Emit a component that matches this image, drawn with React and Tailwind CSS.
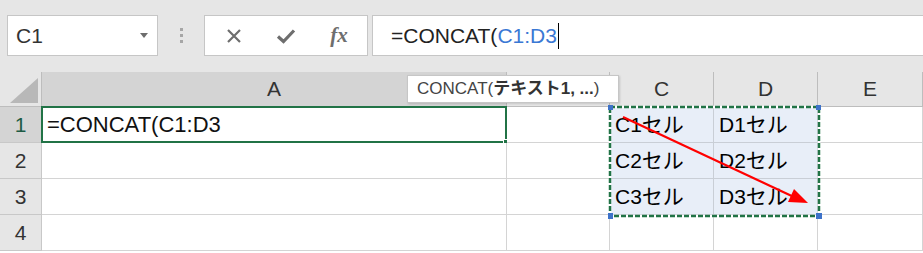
import React from 'react';

const FONT = { fontFamily: '"Liberation Sans", "Noto Sans CJK JP", sans-serif' };

const COLS = ['A', 'B', 'C', 'D', 'E'];
const DATA = {
  C1: 'C1セル', D1: 'D1セル',
  C2: 'C2セル', D2: 'D2セル',
  C3: 'C3セル', D3: 'D3セル',
};

const inSel = (col, row) => (col === 'C' || col === 'D') && row >= 1 && row <= 3;

const Toolbar = () => (
  <div className="h-[72px] bg-[#e6e6e6] flex items-start pt-[15px] pl-[7px]">
    {/* Name box */}
    <div className="w-[151px] h-[41px] bg-white border border-[#c6c6c6] flex items-center justify-between pl-[8px] pr-[9px]">
      <span className="text-[21px] text-[#333] leading-none">C1</span>
      <svg width="8" height="5" viewBox="0 0 8 5"><path d="M0 0h8L4 5z" fill="#6d6d6d" /></svg>
    </div>
    {/* grip dots */}
    <div className="w-[46px] h-[41px] flex flex-col items-center justify-center gap-[3px]">
      <div className="w-[3px] h-[3px] bg-[#a6a6a6]" />
      <div className="w-[3px] h-[3px] bg-[#a6a6a6]" />
      <div className="w-[3px] h-[3px] bg-[#a6a6a6]" />
    </div>
    {/* buttons */}
    <div className="w-[164px] h-[41px] bg-white border border-[#c6c6c6] flex items-center">
      <div className="w-[56px] flex justify-center pl-[2px]">
        <svg width="16" height="16" viewBox="0 0 16 16">
          <path d="M2 2L14 14M14 2L2 14" stroke="#6e6e6e" strokeWidth="2.2" />
        </svg>
      </div>
      <div className="w-[50px] flex justify-center">
        <svg width="20" height="16" viewBox="0 0 20 16">
          <path d="M2 8.5L7.5 13.5L18 2.5" stroke="#6e6e6e" strokeWidth="3.2" fill="none" strokeLinejoin="miter" />
        </svg>
      </div>
      <div className="w-[56px] flex justify-center">
        <span className="text-[21px] italic font-bold text-[#6e6e6e] leading-none" style={{ fontFamily: '"Liberation Serif", serif' }}>fx</span>
      </div>
    </div>
    {/* formula bar */}
    <div className="ml-[4px] flex-1 h-[41px] bg-white border border-[#c6c6c6] border-r-0 flex items-center pl-[18px]">
      <span className="text-[21px] leading-none text-[#222]">=CONCAT(</span>
      <span className="text-[21px] leading-none text-[#3a78d4]">C1:D3</span>
      <div className="w-px h-[26px] bg-black ml-[1px]" />
    </div>
  </div>
);

const Grid = () => (
  <div className="relative">
    <div className="grid grid-cols-[42px_465px_103px_104px_104px_1fr] grid-rows-[35px_36px_36px_36px_36px]">
      {/* corner */}
      <div className="bg-[#e6e6e6] border-r border-b border-[#bdbdbd] relative overflow-hidden">
        <svg className="absolute right-[3px] bottom-[3px]" width="28" height="25" viewBox="0 0 28 25">
          <path d="M28 0V25H0z" fill="#b8b8b8" />
        </svg>
      </div>
      {COLS.map((c) => (
        <div
          key={c}
          className={`${c === 'A' ? 'bg-[#d4d4d4]' : 'bg-[#e6e6e6]'} border-r border-b border-[#bdbdbd] flex items-center justify-center text-[21px] text-[#333]`}
        >
          {c === 'B' ? '' : c}
        </div>
      ))}
      {[1, 2, 3, 4].map((r) => (
        <React.Fragment key={r}>
          <div
            className={`${r === 1 ? 'bg-[#d4d4d4] text-[#1d5b44]' : 'bg-[#e6e6e6] text-[#333]'} border-r border-b border-[#c8c8c8] flex items-center justify-center text-[21px]`}
          >
            {r}
          </div>
          {COLS.map((c) => {
            const key = `${c}${r}`;
            const sel = inSel(c, r);
            return (
              <div
                key={key}
                className={`${sel ? 'bg-[#e8eef8] border-[#c9ced6]' : 'bg-white border-[#d4d4d4]'} border-r border-b flex items-center pl-[5px] text-[21px] text-black whitespace-nowrap relative`}
              >
                {key === 'A1' && (
                  <>
                    <span className="text-[22px] text-[#111]">=CONCAT(C1:D3</span>
                    <div className="absolute -left-px -top-px -right-px -bottom-px border-2 border-[#217346]" />
                    <div className="absolute -right-[4px] -bottom-[4px] w-[7px] h-[7px] bg-[#217346] border border-white" />
                  </>
                )}
                {DATA[key]}
              </div>
            );
          })}
        </React.Fragment>
      ))}
    </div>

    {/* copy-range marquee around C1:D3 */}
    <svg className="absolute left-[607px] top-[33px]" width="215" height="114" viewBox="0 0 215 114">
      <rect x="3" y="2" width="209" height="109" fill="none" stroke="#ffffff" strokeWidth="2.5" />
      <rect x="3" y="2" width="209" height="109" fill="none" stroke="#217346" strokeWidth="2.5" strokeDasharray="5 2" />
      <rect x="1" y="0" width="5" height="5" fill="#3d72c9" />
      <rect x="209" y="0" width="5" height="5" fill="#3d72c9" />
      <rect x="1" y="108" width="5" height="6" fill="#3d72c9" />
      <rect x="209" y="108" width="6" height="6" fill="#3d72c9" />
    </svg>

    {/* red arrow */}
    <svg className="absolute left-[600px] top-[35px]" width="220" height="110" viewBox="0 0 220 110">
      <line x1="23" y1="10" x2="196" y2="91" stroke="#ff0000" strokeWidth="2.2" />
      <path d="M208 96L188 95L194 82z" fill="#ff0000" />
    </svg>
  </div>
);

export default function App() {
  return (
    <div className="relative w-[923px] h-[253px] overflow-hidden bg-white" style={FONT}>
      <Toolbar />
      <Grid />
      {/* function argument tooltip */}
      <div className="absolute left-[407px] top-[75px] w-[212px] h-[28px] bg-white border border-[#c6c6c6] shadow-[1px_1px_2px_rgba(0,0,0,0.15)] flex items-center pl-[9px] text-[17px] text-[#444] whitespace-nowrap">
        <span>CONCAT(</span>
        <span className="font-bold text-[#333]">テキスト1, ...</span>
        <span>)</span>
      </div>
    </div>
  );
}
